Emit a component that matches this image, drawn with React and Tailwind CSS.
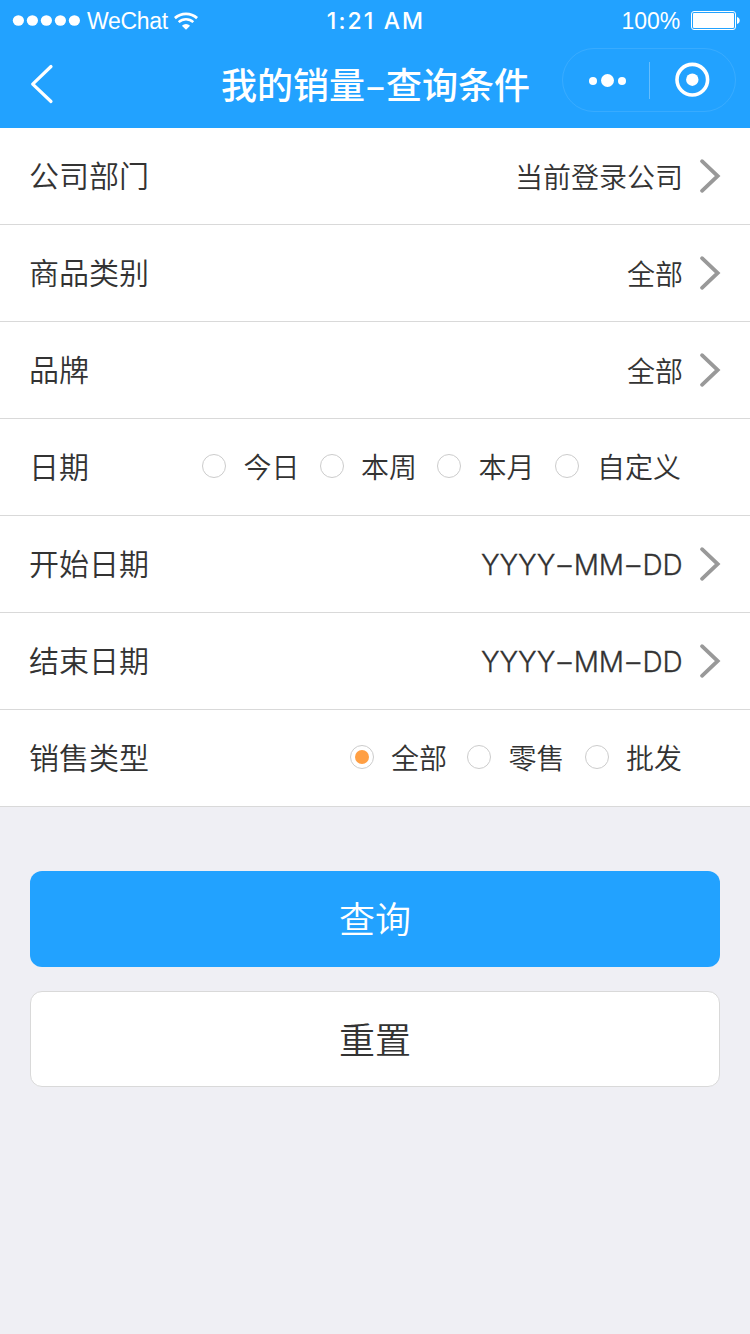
function StatusBar() {
  return (
    <div className="grid h-10 grid-cols-[1fr_auto_1fr] items-center pl-3 pr-[10px] pt-px font-['Liberation_Sans',sans-serif] text-[23px] leading-[41px]">
      <div className="flex items-center">
        <svg className="mb-0.5" width="70" height="12" viewBox="0 0 70 12" fill="currentColor">
          <ellipse cx="6.4" cy="5.500" rx="5.6" ry="5.2" />
          <ellipse cx="20.4" cy="5.500" rx="5.6" ry="5.2" />
          <ellipse cx="34.4" cy="5.500" rx="5.6" ry="5.2" />
          <ellipse cx="48.4" cy="5.500" rx="5.6" ry="5.2" />
          <ellipse cx="62.4" cy="5.500" rx="5.6" ry="5.2" />
        </svg>
        <span className="ml-[5px] w-[87px] whitespace-nowrap tracking-[-0.3px]">WeChat</span>
        <svg className="mb-0.5" width="24" height="18" viewBox="0 0 24 18" fill="none" stroke="currentColor">
          <path d="M.9 6.1a16.5 16.5 0 0 1 22.200 0" strokeWidth="2.800" />
          <path d="M4.700 10.200a10.800 10.800 0 0 1 14.600 0" strokeWidth="2.500" />
          <path d="M12 17.800 7.900 13.700a6 6 0 0 1 8.200 0Z" fill="currentColor" stroke="none" />
        </svg>
      </div>
      <span className="font-['Inter',sans-serif] text-[23px] font-medium tracking-[2.1px]">1:21 AM</span>
      <div className="flex items-center justify-end">
        <span className="mr-[11px] tracking-[-0.1px]">100%</span>
        <svg className="mb-0.5" width="49" height="19" viewBox="0 0 49 19" fill="none">
          <rect x=".5" y=".5" width="44" height="18" rx="2.5" stroke="currentColor" />
          <rect x="2" y="2" width="41" height="15" rx="1" fill="currentColor" />
          <path d="M46 6c1.700.5 2.700 1.800 2.700 3.500s-1 3-2.700 3.500Z" fill="currentColor" />
        </svg>
      </div>
    </div>
  );
}

function NavBar() {
  return (
    <div className="grid h-[88px] grid-cols-[188px_1fr_188px] items-start">
      <svg className="ml-[30px] mt-6" width="24" height="40" viewBox="0 0 24 40" fill="none" stroke="currentColor" strokeWidth="3.200" strokeLinecap="round" strokeLinejoin="round">
        <path d="M21 2.500 2.700 20.200 21 37.500" />
      </svg>
      <h1 className="mt-4 whitespace-nowrap pl-[1px] text-center text-4xl font-medium leading-[54px]">
        我的销量<span className="inline-block w-[21px]">–</span>查询条件
      </h1>
      <div className="mt-2 grid h-16 w-[174px] grid-cols-[86px_1px_1fr] items-center rounded-full border border-white/10">
        <svg className="ml-[25px]" width="40" height="16" viewBox="0 0 40 16" fill="currentColor">
          <circle cx="5" cy="9" r="4" />
          <circle cx="19.500" cy="8.500" r="6.500" />
          <circle cx="34" cy="9" r="4" />
        </svg>
        <span className="h-[37px] bg-white/30" />
        <svg className="ml-[24px]" width="36" height="36" viewBox="0 0 36 36" fill="none">
          <circle cx="18.300" cy="17.700" r="15.300" stroke="currentColor" strokeWidth="3.600" />
          <circle cx="18.300" cy="17.700" r="6.200" fill="currentColor" />
        </svg>
      </div>
    </div>
  );
}

function Row({ label, children }) {
  return (
    <div className="flex h-[97px] items-center justify-between border-b border-[#d9d9d9] bg-white pl-[29px] pr-[29px]">
      <span className="mb-1 text-[30px] leading-[44px]">{label}</span>
      {children}
    </div>
  );
}

function Chevron() {
  return (
    <svg width="22" height="36" viewBox="0 0 22 36" fill="none" stroke="#999" strokeWidth="3.800" strokeLinecap="round">
      <path d="M3 3.200 18.700 18 3 32.800" />
    </svg>
  );
}

function Picker({ label, value }) {
  return (
    <Row label={label}>
      <div className="flex items-center">
        <span className="mr-4 text-[28px] leading-[42px]">{value}</span>
        <Chevron />
      </div>
    </Row>
  );
}

function DatePicker({ label, parts }) {
  return (
    <Row label={label}>
      <div className="flex items-center">
        <span className="mr-[16.5px] mt-0.5 font-['Inter','Noto_Sans_CJK_SC',sans-serif] text-[28px] font-light tracking-[-0.1px] [-webkit-text-stroke:0.3px_#333]">
          {parts.map((part, i) => (
            <span key={i}>
              {i > 0 && <span className="inline-block w-[18.5px] text-center">–</span>}
              {part}
            </span>
          ))}
        </span>
        <Chevron />
      </div>
    </Row>
  );
}

function Radios({ label, options, selected, shifted }) {
  return (
    <Row label={label}>
      <div className={`${shifted ? "mr-10" : "mr-[39px]"} flex items-center gap-[20.5px]`}>
        {options.map((o) => (
          <label key={o} className={`${o.length > 2 ? "gap-[18px]" : "gap-[17px]"} flex items-center`}>
            <span className="mb-0.5 flex size-6 items-center justify-center rounded-full border border-[#ccc]">
              {o === selected && <span className="size-3.5 rounded-full bg-[#ff9f43]" />}
            </span>
            <span className="mb-0.5 text-[28px] leading-[42px]">{o}</span>
          </label>
        ))}
      </div>
    </Row>
  );
}

export default function App() {
  return (
    <div className="flex min-h-[1334px] w-[750px] flex-col bg-[#efeff4] font-['Noto_Sans_CJK_SC',sans-serif] font-[350] text-[#333]">
      <header className="h-32 bg-[#22a2ff] text-white">
        <StatusBar />
        <NavBar />
      </header>
      <main>
        <Picker label="公司部门" value="当前登录公司" />
        <Picker label="商品类别" value="全部" />
        <Picker label="品牌" value="全部" />
        <Radios label="日期" options={["今日", "本周", "本月", "自定义"]} shifted />
        <DatePicker label="开始日期" parts={["YYYY", "MM", "DD"]} />
        <DatePicker label="结束日期" parts={["YYYY", "MM", "DD"]} />
        <Radios label="销售类型" options={["全部", "零售", "批发"]} selected="全部" />
        <div className="flex flex-col gap-6 px-[30px] pt-16">
          <button className="h-24 rounded-xl bg-[#22a2ff] pb-1 text-4xl text-white">查询</button>
          <button className="h-24 rounded-xl border border-[#d9d9d9] bg-white pb-0.5 text-4xl">重置</button>
        </div>
      </main>
    </div>
  );
}
